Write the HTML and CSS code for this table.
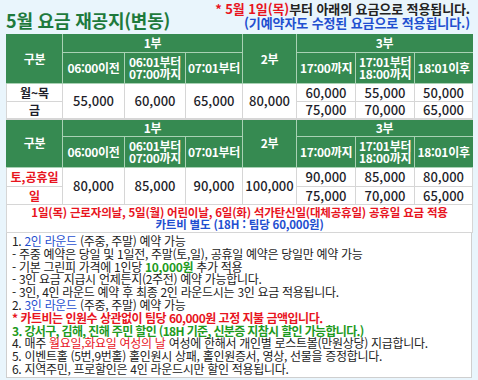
FILE: index.html
```html
<!DOCTYPE html>
<html lang="ko">
<head>
<meta charset="utf-8">
<link rel="stylesheet" href="styles.css">
</head>
<body>
<div class="page">
  <div class="top">
    <h1 class="title">5월 요금 재공지(변동)</h1>
    <div class="notice">
      <p><span class="red">* 5월 1일(목)</span>부터 아래의 요금으로 적용됩니다.</p>
      <p class="blue">(기예약자도 수정된 요금으로 적용됩니다.)</p>
    </div>
  </div>
  <table class="fees">
    <colgroup>
      <col class="c1"><col class="c2"><col class="c3"><col class="c4"><col class="c5"><col class="c6"><col class="c7"><col class="c8">
    </colgroup>
    <tr class="h1">
      <th rowspan="2">구분</th>
      <th colspan="3">1부</th>
      <th rowspan="2">2부</th>
      <th colspan="3">3부</th>
    </tr>
    <tr class="h2">
      <th>06:00이전</th>
      <th>06:01부터<br>07:00까지</th>
      <th>07:01부터</th>
      <th>17:00까지</th>
      <th>17:01부터<br>18:00까지</th>
      <th>18:01이후</th>
    </tr>
    <tr class="d1">
      <td class="lbl">월~목</td>
      <td rowspan="2">55,000</td>
      <td rowspan="2">60,000</td>
      <td rowspan="2">65,000</td>
      <td rowspan="2">80,000</td>
      <td>60,000</td>
      <td>55,000</td>
      <td>50,000</td>
    </tr>
    <tr class="d2">
      <td class="lbl">금</td>
      <td>75,000</td>
      <td>70,000</td>
      <td>65,000</td>
    </tr>
    <tr class="h1 sep">
      <th rowspan="2">구분</th>
      <th colspan="3">1부</th>
      <th rowspan="2">2부</th>
      <th colspan="3">3부</th>
    </tr>
    <tr class="h2">
      <th>06:00이전</th>
      <th>06:01부터<br>07:00까지</th>
      <th>07:01부터</th>
      <th>17:00까지</th>
      <th>17:01부터<br>18:00까지</th>
      <th>18:01이후</th>
    </tr>
    <tr class="d3">
      <td class="lbl red">토,공휴일</td>
      <td rowspan="2">80,000</td>
      <td rowspan="2">85,000</td>
      <td rowspan="2">90,000</td>
      <td rowspan="2">100,000</td>
      <td>90,000</td>
      <td>85,000</td>
      <td>80,000</td>
    </tr>
    <tr class="d4">
      <td class="lbl red">일</td>
      <td>75,000</td>
      <td>70,000</td>
      <td>65,000</td>
    </tr>
    <tr class="note">
      <td colspan="8">
        <p class="red">1일(목) 근로자의날, 5일(월) 어린이날, 6일(화) 석가탄신일(대체공휴일) 공휴일 요금 적용</p>
        <p class="blue">카트비 별도 (18H : 팀당 60,000원)</p>
      </td>
    </tr>
  </table>
  <div class="info">
    <p>1. <span class="blue">2인 라운드</span> (주중, 주말) 예약 가능</p>
    <p>- 주중 예약은 당일 및 1일전, 주말(토,일), 공휴일 예약은 당일만 예약 가능</p>
    <p>- 기본 그린피 가격에 1인당 <b class="green">10,000원</b> 추가 적용</p>
    <p>- 3인 요금 지급시 언제든지(2주전) 예약 가능합니다.</p>
    <p>- 3인, 4인 라운드 예약 후 최종 2인 라운드시는 3인 요금 적용됩니다.</p>
    <p>2. <span class="blue">3인 라운드</span> (주중, 주말) 예약 가능</p>
    <p class="red strong cart">* 카트비는 인원수 상관없이 팀당 60,000원 고정 지불 금액입니다.</p>
    <p class="green strong local">3. 강서구, 김해, 진해 주민 할인 (18H 기준, 신분증 지참시 할인 가능합니다.)</p>
    <p>4. 매주 <span class="red">월요일,화요일 여성의 날</span> 여성에 한해서 개인별 로스트볼(만원상당) 지급합니다.</p>
    <p>5. 이벤트홀 (5번,9번홀) 홀인원시 상패, 홀인원증서, 영상, 선물을 증정합니다.</p>
    <p>6. 지역주민, 프로할인은 4인 라운드시만 할인 적용됩니다.</p>
  </div>
</div>
</body>
</html>
```

FILE: styles.css
```css
* { box-sizing: border-box; }
html, body { margin: 0; padding: 0; }
body {
  background: #e9f5fc;
  font-family: "Noto Sans CJK KR", "Noto Sans", sans-serif;
  color: #222;
}
p { margin: 0; }
.page {
  width: 478px;
  padding: 0 6px;
}
.red { color: #e8141e; }
.blue { color: #1f4fd0; }
.green { color: #1e9a1e; }
.strong { font-weight: 700; }

.top {
  height: 34px;
  display: flex;
  justify-content: space-between;
  align-items: flex-start;
}
.title {
  margin: 9px 0 0 0;
  font-size: 18px;
  line-height: 22px;
  font-weight: 700;
  color: #1e7a3c;
  letter-spacing: -0.2px;
}
.notice {
  text-align: right;
  font-size: 13px;
  font-weight: 700;
  line-height: 13.5px;
  padding-top: 2px;
  padding-right: 2px;
  letter-spacing: -0.1px;
}

.fees {
  width: 466px;
  border-collapse: collapse;
  table-layout: fixed;
  background: #fff;
}
.c1 { width: 56px; }
.c2 { width: 62px; }
.c3 { width: 61px; }
.c4 { width: 57px; }
.c5 { width: 54px; }
.c6 { width: 59px; }
.c7 { width: 59px; }
.c8 { width: 58px; }

.fees th {
  background: #368a51;
  color: #fff;
  font-size: 12px;
  font-weight: 700;
  line-height: 12.5px;
  padding: 0;
  border: 1px solid #a9d1b4;
  text-align: center;
  letter-spacing: -0.3px;
}
.fees tr.h1 th { border-top-color: #368a51; }
.fees th:first-child { border-left-color: #368a51; }
.fees th:last-child { border-right-color: #368a51; }
.fees tr.sep th { border-top: 2px solid #d6d6d6; }
.h1 { height: 18px; }
.h2 { height: 31px; }
.d1 { height: 18px; }
.d2 { height: 17px; }
.d3 { height: 19px; }
.d4 { height: 18px; }

.fees td {
  border: 1px solid #d6d6d6;
  padding: 0;
  text-align: center;
  font-size: 13px;
  line-height: 14px;
  font-weight: 500;
  color: #1e1e2a;
}
.fees td.lbl {
  font-size: 12px;
  font-weight: 700;
  line-height: 12px;
}
.fees td.lbl.red { color: #e8141e; }

.note td {
  height: 28px;
  font-size: 11.5px;
  line-height: 12px;
  font-weight: 700;
  padding-bottom: 1px;
  letter-spacing: -0.2px;
}

.info {
  width: 466px;
  background: #fff;
  border: 1px solid #cfcfcf;
  border-top: none;
  padding: 2px 4px 1px 5px;
  font-size: 12px;
  line-height: 12.8px;
  letter-spacing: -0.3px;
  color: #222;
}
.info b { font-weight: 700; }
.info .cart { letter-spacing: -0.5px; }
.info .local { letter-spacing: -0.65px; }
```
